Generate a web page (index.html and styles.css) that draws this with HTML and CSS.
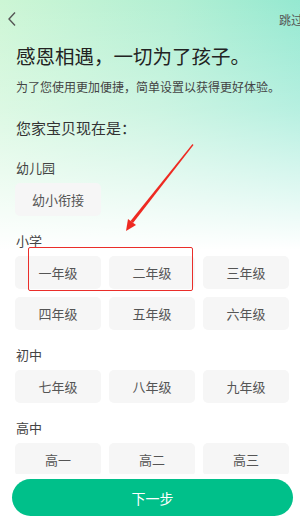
FILE: index.html
```html
<!DOCTYPE html>
<html lang="zh">
<head>
<meta charset="utf-8">
<link rel="stylesheet" href="styles.css">
</head>
<body>
<div class="page">
  <div class="header">
    <svg class="back" width="10" height="16" viewBox="0 0 10 16"><path d="M8 1.5 L2 8 L8 14.5" fill="none" stroke="#555" stroke-width="1.4"/></svg>
    <span class="skip">跳过</span>
  </div>
  <h1 class="title">感恩相遇，一切为了孩子。</h1>
  <p class="sub">为了您使用更加便捷，简单设置以获得更好体验。</p>
  <p class="question">您家宝贝现在是：</p>

  <div class="section section-first">
    <div class="label">幼儿园</div>
    <div class="grid">
      <div class="opt">幼小衔接</div>
    </div>
  </div>
  <div class="section">
    <div class="label">小学</div>
    <div class="grid">
      <div class="opt">一年级</div>
      <div class="opt">二年级</div>
      <div class="opt">三年级</div>
      <div class="opt">四年级</div>
      <div class="opt">五年级</div>
      <div class="opt">六年级</div>
    </div>
  </div>
  <div class="section">
    <div class="label">初中</div>
    <div class="grid">
      <div class="opt">七年级</div>
      <div class="opt">八年级</div>
      <div class="opt">九年级</div>
    </div>
  </div>
  <div class="section">
    <div class="label">高中</div>
    <div class="grid">
      <div class="opt">高一</div>
      <div class="opt">高二</div>
      <div class="opt">高三</div>
    </div>
  </div>

  <div class="footer">
    <div class="next">下一步</div>
  </div>

  <div class="mark-box"></div>
  <svg class="mark-arrow" width="300" height="525" viewBox="0 0 300 525">
    <polygon points="192.5,144 193.5,145 133,223 130.5,221" fill="#ee2a22"/>
    <polygon points="126,231 128,219 136,225" fill="#ee2a22"/>
  </svg>
</div>
</body>
</html>
```

FILE: styles.css
```css
* { box-sizing: border-box; }
html, body { margin: 0; padding: 0; }
body {
  font-family: "Noto Sans CJK SC", "Noto Sans", sans-serif;
  color: #333;
}
.page {
  position: relative;
  width: 300px;
  height: 525px;
  overflow: hidden;
  padding: 0 11px 0 15px;
  background:
    linear-gradient(180deg, rgba(255,255,255,0) 0px, rgba(255,255,255,0.35) 110px, #fff 250px),
    linear-gradient(100deg, #cdf6d5 0%, #b2efd3 45%, #7fe4cf 100%);
}
.header {
  height: 42px;
  display: flex;
  justify-content: space-between;
  align-items: flex-start;
  margin-left: -8px;
  margin-right: -14px;
  padding-top: 11px;
}
.back { display: block; }
.skip {
  font-size: 12px;
  line-height: 16px;
  color: #555;
  margin-top: 1px;
}
.title {
  margin: 0 0 0 1px;
  font-size: 19.5px;
  line-height: 28px;
  font-weight: 400;
  color: #222;
}
.sub {
  margin: 8px 0 0 1px;
  font-size: 12px;
  line-height: 18px;
  color: #444;
}
.question {
  margin: 22px 0 0 1px;
  font-size: 15px;
  line-height: 20px;
  color: #333;
}
.section { margin-top: 16px; }
.section-first { margin-top: 21px; }
.label {
  font-size: 13px;
  line-height: 18px;
  color: #444;
  margin-left: 1px;
}
.grid {
  margin-top: 6px;
  display: grid;
  grid-template-columns: repeat(3, 1fr);
  gap: 8px;
}
.opt {
  height: 33px;
  background: #f6f6f6;
  border-radius: 5px;
  display: flex;
  align-items: center;
  justify-content: center;
  font-size: 13px;
  color: #555;
}
.footer {
  position: absolute;
  left: 0;
  right: 0;
  bottom: 0;
  height: 51px;
  background: #fff;
  padding: 5px 7px 0 12px;
}
.next {
  height: 37px;
  border-radius: 19px;
  background: #00c08a;
  color: #fff;
  font-size: 14px;
  display: flex;
  align-items: center;
  justify-content: center;
}
.mark-box {
  position: absolute;
  left: 28px;
  top: 247px;
  width: 165px;
  height: 44px;
  border: 1.5px solid #ea2e2a;
  border-radius: 2px;
}
.mark-arrow {
  position: absolute;
  left: 0;
  top: 0;
}
```
